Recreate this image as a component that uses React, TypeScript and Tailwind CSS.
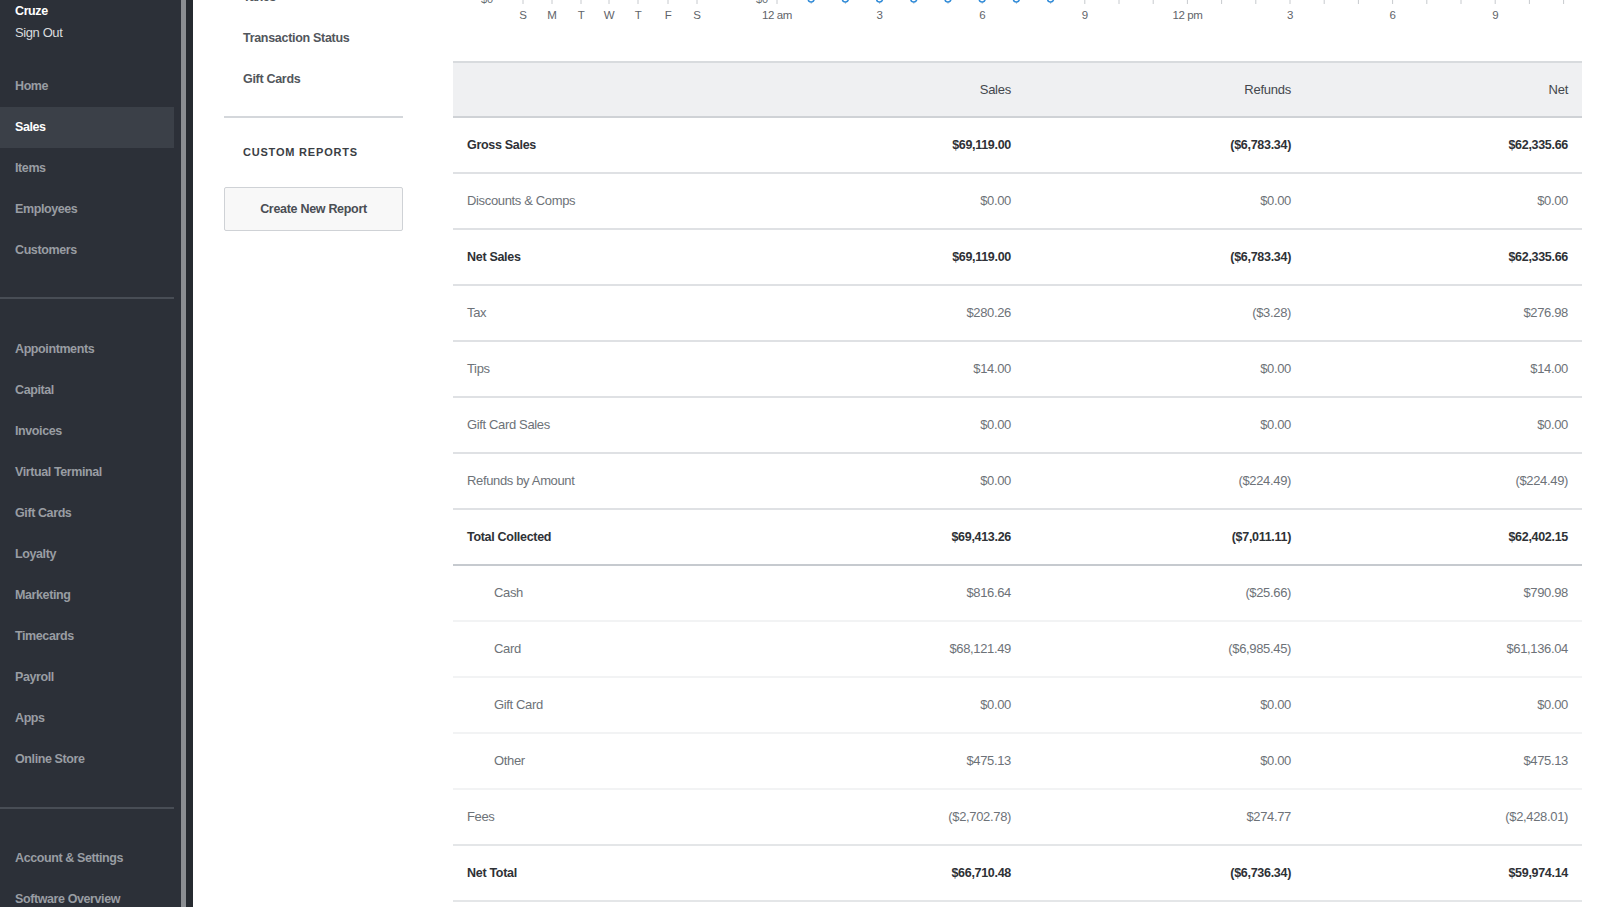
import React from "react";

const topNav = ["Home", "Sales", "Items", "Employees", "Customers"];
const midNav = [
  "Appointments",
  "Capital",
  "Invoices",
  "Virtual Terminal",
  "Gift Cards",
  "Loyalty",
  "Marketing",
  "Timecards",
  "Payroll",
  "Apps",
  "Online Store",
];
const botNav = ["Account & Settings", "Software Overview"];

type Row = {
  label: string;
  sales: string;
  refunds: string;
  net: string;
  bold?: boolean;
  sub?: boolean;
  border: string;
};

const rows: Row[] = [
  { label: "Gross Sales", sales: "$69,119.00", refunds: "($6,783.34)", net: "$62,335.66", bold: true, border: "border-[#dfe1e4]" },
  { label: "Discounts & Comps", sales: "$0.00", refunds: "$0.00", net: "$0.00", border: "border-[#dfe1e4]" },
  { label: "Net Sales", sales: "$69,119.00", refunds: "($6,783.34)", net: "$62,335.66", bold: true, border: "border-[#dfe1e4]" },
  { label: "Tax", sales: "$280.26", refunds: "($3.28)", net: "$276.98", border: "border-[#dfe1e4]" },
  { label: "Tips", sales: "$14.00", refunds: "$0.00", net: "$14.00", border: "border-[#dfe1e4]" },
  { label: "Gift Card Sales", sales: "$0.00", refunds: "$0.00", net: "$0.00", border: "border-[#dfe1e4]" },
  { label: "Refunds by Amount", sales: "$0.00", refunds: "($224.49)", net: "($224.49)", border: "border-[#dfe1e4]" },
  { label: "Total Collected", sales: "$69,413.26", refunds: "($7,011.11)", net: "$62,402.15", bold: true, border: "border-[#c6cacf]" },
  { label: "Cash", sales: "$816.64", refunds: "($25.66)", net: "$790.98", sub: true, border: "border-[#f2f3f4]" },
  { label: "Card", sales: "$68,121.49", refunds: "($6,985.45)", net: "$61,136.04", sub: true, border: "border-[#f2f3f4]" },
  { label: "Gift Card", sales: "$0.00", refunds: "$0.00", net: "$0.00", sub: true, border: "border-[#f2f3f4]" },
  { label: "Other", sales: "$475.13", refunds: "$0.00", net: "$475.13", sub: true, border: "border-[#f2f3f4]" },
  { label: "Fees", sales: "($2,702.78)", refunds: "$274.77", net: "($2,428.01)", border: "border-[#e4e6e8]" },
  { label: "Net Total", sales: "$66,710.48", refunds: "($6,736.34)", net: "$59,974.14", bold: true, border: "border-[#e4e6e8]" },
];

function NavItem({ label, active }: { label: string; active?: boolean }) {
  return (
    <div
      className={
        "shrink-0 w-[174px] h-[41px] pl-[15px] flex items-center text-[12.5px] tracking-[-0.4px] font-bold " +
        (active ? "bg-[#3b4048] text-white" : "text-[#999da3]")
      }
    >
      {label}
    </div>
  );
}

function Chart() {
  const off = 453;
  const week = ["S", "M", "T", "W", "T", "F", "S"];
  const weekX = [523, 552, 581, 609, 638, 668, 697];
  const hourX = (k: number) => 777 + 34.2 * k;
  const hourLabels: Record<number, string> = {
    0: "12 am",
    3: "3",
    6: "6",
    9: "9",
    12: "12 pm",
    15: "3",
    18: "6",
    21: "9",
  };
  return (
    <svg width="1129" height="61" className="block" style={{ fontFamily: '"Liberation Sans",Arial,sans-serif' }}>
      <text x={487 - off} y={3} fontSize="11" fill="#6a6f75" textAnchor="middle">
        $0
      </text>
      {weekX.map((x, i) => (
        <g key={"w" + i}>
          <line x1={x - off} x2={x - off} y1={0} y2={4} stroke="#c7cace" strokeWidth="1" />
          <text x={x - off} y={19} fontSize="11.5" fill="#5f646a" textAnchor="middle" letterSpacing="-0.3">
            {week[i]}
          </text>
        </g>
      ))}
      <text x={762 - off} y={3} fontSize="11" fill="#6a6f75" textAnchor="middle">
        $0
      </text>
      {Array.from({ length: 24 }).map((_, k) => (
        <line
          key={"h" + k}
          x1={hourX(k) - off}
          x2={hourX(k) - off}
          y1={0}
          y2={4}
          stroke="#c7cace"
          strokeWidth="1"
        />
      ))}
      {Object.entries(hourLabels).map(([k, l]) => (
        <text
          key={"hl" + k}
          x={hourX(Number(k)) - off}
          y={19}
          fontSize="11.5"
          fill="#5f646a"
          textAnchor="middle"
          letterSpacing="-0.4"
        >
          {l}
        </text>
      ))}
      {[1, 2, 3, 4, 5, 6, 7, 8].map((k) => (
        <circle
          key={"c" + k}
          cx={hourX(k) - off}
          cy={-1}
          r={3}
          fill="#fff"
          stroke="#2e8ad8"
          strokeWidth="1.5"
        />
      ))}
    </svg>
  );
}

export default function App() {
  return (
    <div className="flex h-screen overflow-hidden bg-white font-['Liberation_Sans',Arial,sans-serif]">
      {/* Sidebar */}
      <div className="flex shrink-0">
        <div className="w-[181px] bg-[#2c3038] flex flex-col">
          <div className="shrink-0 pl-[15px] text-[12.5px] tracking-[-0.4px] leading-[22px] font-bold text-white">Cruze</div>
          <div className="shrink-0 pl-[15px] text-[13px] tracking-[-0.4px] leading-[22px] text-[#d9dbde]">Sign Out</div>
          <div className="shrink-0 mt-[22px]">
            {topNav.map((n) => (
              <NavItem key={n} label={n} active={n === "Sales"} />
            ))}
          </div>
          <div className="shrink-0 mt-[26px] h-[2px] w-[174px] bg-[#484d55]" />
          <div className="shrink-0 mt-[30px]">
            {midNav.map((n) => (
              <NavItem key={n} label={n} />
            ))}
          </div>
          <div className="shrink-0 mt-[27px] h-[2px] w-[174px] bg-[#484d55]" />
          <div className="shrink-0 mt-[29px]">
            {botNav.map((n) => (
              <NavItem key={n} label={n} />
            ))}
          </div>
        </div>
        <div className="w-[5px] bg-[#8b8e92]" />
        <div className="w-[7px] bg-[#262a30]" />
      </div>

      {/* Reports column */}
      <div className="w-[260px] shrink-0 pl-[31px]">
        <div className="w-[179px] -mt-[23px]">
          {["Taxes", "Transaction Status", "Gift Cards"].map((t) => (
            <div
              key={t}
              className="h-[41px] pl-[19px] flex items-center text-[12.5px] tracking-[-0.3px] font-bold text-[#52565c]"
            >
              {t}
            </div>
          ))}
          <div className="mt-[16px] h-[2px] bg-[#d4d7db]" />
          <div className="mt-[27px] pl-[19px] h-[14px] flex items-center text-[11px] font-bold tracking-[0.8px] text-[#3a3e44]">
            CUSTOM REPORTS
          </div>
          <button className="mt-[28px] w-[179px] h-[44px] rounded-[2px] border border-[#cfd2d6] bg-[#f8f8f8] text-[12.5px] tracking-[-0.3px] font-bold text-[#4a4e54] flex items-center justify-center">
            Create New Report
          </button>
        </div>
      </div>

      {/* Main */}
      <div className="w-[1129px] shrink-0">
        <Chart />
        <div className="h-[57px] grid grid-cols-[1fr_280px_280px_277px] items-center px-[14px] bg-[#eff0f2] border-y-2 border-t-[#d8dbde] border-b-[#cfd2d6] text-[13px] tracking-[-0.25px] text-[#43474d]">
          <div />
          <div className="text-right">Sales</div>
          <div className="text-right">Refunds</div>
          <div className="text-right">Net</div>
        </div>
        {rows.map((r) => (
          <div
            key={r.label}
            className={
              "h-[56px] grid grid-cols-[1fr_280px_280px_277px] items-center px-[14px] border-b-2 " +
              r.border +
              " " +
              (r.bold
                ? "text-[12.5px] tracking-[-0.3px] font-bold text-[#2e3136]"
                : "text-[13px] tracking-[-0.35px] text-[#6d7278]")
            }
          >
            <div className={r.sub ? "pl-[27px]" : ""}>{r.label}</div>
            <div className="text-right">{r.sales}</div>
            <div className="text-right">{r.refunds}</div>
            <div className="text-right">{r.net}</div>
          </div>
        ))}
      </div>
    </div>
  );
}
